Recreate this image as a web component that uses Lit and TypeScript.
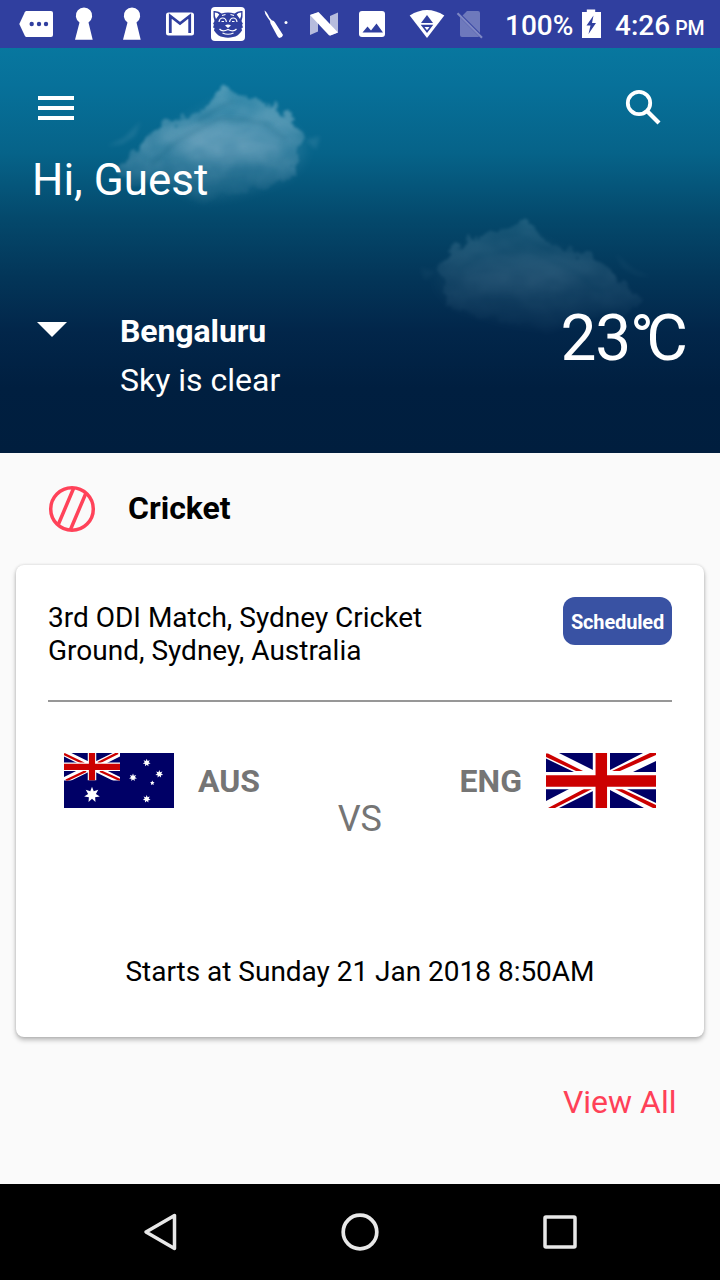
import { LitElement, html, svg, css } from "lit";
import { customElement } from "lit/decorators.js";

@customElement("status-bar")
class StatusBar extends LitElement {
  static styles = css`
    :host { display: flex; height: 48px; background: #303f9f; color: #fff; font-family: Roboto, sans-serif; font-weight: 500; }
    svg { display: block; flex: none; }
    .battery-text { width: 74px; padding-left: 5px; box-sizing: border-box; font-size: 28px; line-height: 51px; white-space: nowrap; }
    .clock { padding-left: 9px; font-size: 28px; line-height: 51px; white-space: nowrap; }
    .clock small { font-size: 19.5px; margin-left: 5px; }
  `;

  cell(x: number, w: number, body: unknown) {
    return html`<svg width=${w} height="48" viewBox="${x} 0 ${w} 48" fill="#fff">${body}</svg>`;
  }

  render() {
    const keyhole = (x: number) => svg`<path d="M${x - 4.5} 22.5a8.2 8.2 0 1 1 9 0l4.2 17.2h-17.7z"/>`;
    return html`
      ${this.cell(0, 60, svg`<path d="M26.5 11H51q2 0 2 2v22q0 2-2 2H26.500q-1 0-1.700-1.200L19.300 24l5.500-11.800q.7-1.200 1.700-1.200z"/><g fill="#303f9f"><circle cx="31.700" cy="24" r="2.200"/><circle cx="39" cy="24" r="2.200"/><circle cx="46" cy="24" r="2.200"/></g>`)}
      ${this.cell(60, 48, keyhole(84))}
      ${this.cell(108, 48, keyhole(132))}
      ${this.cell(156, 48, svg`<rect x="166" y="12.500" width="28" height="23" rx="2.500"/><path d="M170.300 33V16l9.700 7.500 9.700-7.500v17" fill="none" stroke="#303f9f" stroke-width="2.800"/>`)}
      ${this.cell(204, 48, svg`
        <rect x="211" y="7" width="34" height="34" rx="4"/>
        <path fill="#303f9f" d="M213.500 11q5-.5 8 2.500 6.500-2 13 0 3-3 8-2.500.5 6-1 10l1.500 3-1 .5 1 3-1.500.5.500 2.500q-4 6-9 6.500-5 1.500-10 0-5-.5-9-6.500l.5-2.500-1.500-.5 1-3-1-.5 1.500-3q-1.500-4-1-10z"/>
        <path d="M214.800 12.500q3 0 4.500 2l-3.300 4.500q-1.500-3-1.200-6.500zM241.200 12.500q-3 0-4.500 2l3.300 4.500q1.500-3 1.200-6.500z"/>
        <g fill="none" stroke="#fff" stroke-width="1.200">
          <path d="M222 15.500l3.500-1M230.500 14.500l3.500 1"/>
          <path d="M219 22q.5-4 3.700-4t3.700 4M229.600 22q.5-4 3.700-4t3.700 4M221.500 21.500h2.500M232 21.500h2.500"/>
          <path d="M219.500 29q3 3.500 8.500 .5 5.500 3 8.500-.5M222.500 33q5.500 2.500 11 0"/>
        </g>
        <path d="M225 25.500q3-2 6 0l-3 2.500z"/>`)}
      ${this.cell(252, 48, svg`<path d="M264.500 10.500q2.500 1.500 4.800 7l2.700 3q1.500-.5 3 2l8 12.500q-.5 2.500-3.500 3-1.500-.5-2.500-2.500l-6.500-12-.500-2.500-2.500-3.500q-3-4-3-7z"/><circle cx="286" cy="22.500" r="1.500"/>`)}
      ${this.cell(300, 48, svg`<path d="M310 15l8-2.500v19l-8 3.500zM330 16l8-3.500v20l-8 3z" opacity=".65"/><path d="M310 15l8.500-3 19.500 20.500-7.500 3q-1 .3-1.800-.500z"/>`)}
      ${this.cell(348, 48, svg`<rect x="359" y="11" width="26" height="26" rx="3"/><path d="M362.500 32.500l5-6 3.500 4 5.500-7 6.500 9z" fill="#303f9f"/>`)}
      ${this.cell(396, 54, svg`<path d="M409.700 15.500Q427 4.500 444.300 15.500L427 38z"/><path d="M427 15l6 8h-12zM420.700 24.800h12.600L427 33z" fill="#303f9f"/><path d="M424.500 27h5l-2.500 3.300z"/>`)}
      ${this.cell(450, 50, svg`<g opacity=".3"><path d="M460 17.500l19 19q-.5.5-1.500.5H462q-2 0-2-2zM462.500 15.500l4.500-4.500h11q2 0 2 2v20z"/></g><path d="M457.500 13.300l24.500 24.500" stroke="#fff" stroke-width="2.200" opacity=".38"/>`)}
      <span class="battery-text">100%</span>
      ${this.cell(574, 32, svg`<path d="M586.800 12v-2.500h8.400V12h5.800v26h-19V12z"/><path d="M593.500 15.500l-7 10h4l-2 8.500 7.500-11h-4z" fill="#303f9f"/>`)}
      <span class="clock">4:26<small>PM</small></span>`;
  }
}

@customElement("sky-clouds")
class SkyClouds extends LitElement {
  static styles = css`
    :host { position: absolute; inset: 0; }
    svg { display: block; }
  `;
  render() {
    return html`<svg width="720" height="405" viewBox="0 48 720 405">
      <defs>
        <linearGradient id="haze" x1="0" y1="0" x2="0" y2="1">
          <stop offset="0" stop-color="#a4cbd9" stop-opacity=".46"/>
          <stop offset=".5" stop-color="#a4c4d6" stop-opacity=".42"/>
          <stop offset=".68" stop-color="#8fb4ca" stop-opacity=".27"/>
          <stop offset=".85" stop-color="#7fa3bb" stop-opacity=".1"/>
          <stop offset="1" stop-color="#7fa3bb" stop-opacity=".01"/>
        </linearGradient>
        <filter id="rough" x="-20%" y="-20%" width="140%" height="140%" color-interpolation-filters="sRGB">
          <feTurbulence type="fractalNoise" baseFrequency=".07" numOctaves="4" seed="11" result="n"/>
          <feDisplacementMap in="SourceGraphic" in2="n" scale="16" xChannelSelector="R" yChannelSelector="G" result="shape"/>
          <feTurbulence type="fractalNoise" baseFrequency=".022 .04" numOctaves="3" seed="4"/>
          <feColorMatrix values="0 0 0 0 1  0 0 0 0 1  0 0 0 0 1  1.100 0 0 0 .25" result="mist"/>
          <feComposite in="shape" in2="mist" operator="in"/>
          <feGaussianBlur stdDeviation="1.600"/>
        </filter>
        <filter id="soft" x="-30%" y="-50%" width="160%" height="200%" color-interpolation-filters="sRGB"><feGaussianBlur stdDeviation="6"/></filter>
        <filter id="ridge" x="-30%" y="-50%" width="160%" height="200%" color-interpolation-filters="sRGB"><feGaussianBlur stdDeviation="2"/></filter>
        <g id="cloud">
          <path filter="url(#rough)" fill="url(#haze)" d="M116 170L134 152 147 138 158 130 166 121 176 125 186 115 199 113 211 98 223 84 232 92 241 98 255 95 267 103 273 107 275 102 280 111 290 115 295 127 305 137 300 152 294 166 296 178 284 180 267 187 238 190 218 196 207 206 192 203 186 193 158 188 122 180z"/>
          <path filter="url(#soft)" fill="#8fb9d0" opacity=".13" d="M120 172L170 128 222 98 276 112 306 142 304 160 288 178 240 194 200 200 180 190z"/>
          <path filter="url(#ridge)" fill="#a5c9d9" opacity=".12" d="M107 146l17-8 17-17-6 15-13 8zM306 140l14-4-4 14z"/>
          <path filter="url(#soft)" fill="#aac9df" opacity=".2" d="M174 152Q190 130 220 123L258 124Q284 131 284 148L262 157 210 158z"/>
          <path filter="url(#ridge)" fill="none" stroke="#06506f" stroke-width="3.500" opacity=".16" d="M150 165L176 142 196 130 219 119 242 119 266 124 285 139M198 122L218 108 234 101"/>
        </g>
      </defs>
      <use href="#cloud"/>
      <g opacity=".35"><use href="#cloud" transform="translate(769 137) scale(-1.09 .96)"/></g>
    </svg>`;
  }
}

@customElement("union-flag")
class UnionFlag extends LitElement {
  static styles = css`:host, svg { display: block; }`;
  render() {
    return html`<svg width="110" height="55" viewBox="0 0 110 55">
      <rect width="110" height="55" fill="#fff"/>
      <path fill="#006" d="M13 0H47V17zM0 5.500V19H28zM64 0H97L64 17zM110 8V19H87zM0 36H23L0 48zM13 55H47V38zM64 37V55H98zM81 36H110V50z"/>
      <path d="M0 .5h2L37 18h-7L0 4zM110 0h-6L66 18h8L110 2zM2 55h7L46 36h-8zM69 36h7L110 52v3h-3z" fill="#c00"/>
      <path d="M55.300 0v55M0 27.700h110" stroke="#fff" stroke-width="17"/>
      <path d="M55.300 0v55M0 27.900h110" stroke="#c00" stroke-width="11.500"/>
    </svg>`;
  }
}

@customElement("australia-flag")
class AustraliaFlag extends LitElement {
  static styles = css`:host, svg { display: block; }`;
  star(cx: number, cy: number, r: number, n = 7) {
    const pts = Array.from({ length: n * 2 }, (_, i) => {
      const q = i % 2 ? r * 0.5 : r;
      const a = (Math.PI * i) / n - Math.PI / 2;
      return `${(cx + q * Math.cos(a)).toFixed(2)},${(cy + q * Math.sin(a)).toFixed(2)}`;
    }).join(" ");
    return svg`<polygon points=${pts} fill="#fff"/>`;
  }
  render() {
    return html`<svg width="110" height="55" viewBox="0 0 110 55">
      <rect width="110" height="55" fill="#006"/>
      <svg width="56" height="27.500" viewBox="0 0 56 27.500">
        <path d="M0 0L56 27.500M56 0L0 27.500" stroke="#fff" stroke-width="6.500"/>
        <path d="M0 1L20 10.500M54 0L34 10M2 27.500L22 18M56 27L36 18" stroke="#c00" stroke-width="2.400"/>
        <path d="M28 0v27.500M0 13.800h56" stroke="#fff" stroke-width="8.500"/>
        <path d="M28 0v27.500M0 13.900h56" stroke="#c00" stroke-width="6.200"/>
      </svg>
      ${this.star(28, 41.800, 8)}${this.star(82.700, 9.700, 4)}${this.star(95.300, 21, 4)}
      ${this.star(69, 24.500, 4)}${this.star(82.700, 46, 4)}${this.star(88.300, 30, 2.400, 5)}
    </svg>`;
  }
}

@customElement("app-root")
class AppRoot extends LitElement {
  static styles = css`
    :host { display: flex; flex-direction: column; width: 720px; height: 1280px; overflow: hidden; background: #fafafa; color: #000; font-family: Roboto, sans-serif; }
    svg { display: block; }
    .hero { position: relative; height: 405px; flex: none; color: #fff; background: linear-gradient(#08779f 0, #07719a 9%, #066389 26%, #04496c 42%, #033558 57%, #02264a 70%, #001f40 84%, #001e3e 100%); }
    .content { position: relative; display: flex; flex-direction: column; height: 100%; }
    .toolbar { display: flex; justify-content: space-between; padding: 40px 56px 0 38px; height: 62px; }
    .hello { padding-left: 32px; font-size: 44px; line-height: 60px; }
    .weather { display: flex; margin-top: 98px; padding: 0 32px 0 37px; }
    .place { flex: 1; margin-left: 53px; }
    .city { font-size: 32px; font-weight: 700; line-height: 46px; letter-spacing: -.1px; }
    .sky { font-size: 32px; line-height: 52px; }
    .arrow { margin-top: 14px; }
    .temp { font-size: 64px; line-height: 62px; white-space: nowrap; }
    .digits { letter-spacing: -1.2px; }
    .degree { letter-spacing: -7.6px; }
    .section { display: flex; align-items: center; height: 112px; padding-left: 48px; gap: 32px; font-size: 32px; font-weight: 700; flex: none; }
    .section span { line-height: 38px; margin-top: -2px; }
    .card { margin: 0 16px; height: 472px; box-sizing: border-box; padding: 32px; border-radius: 8px; background: #fff; box-shadow: 0 3px 5px rgba(0,0,0,.26), 0 0 3px rgba(0,0,0,.14); flex: none; }
    .top { display: flex; justify-content: space-between; align-items: flex-start; height: 103px; border-bottom: 2px solid #979797; }
    .venue { font-size: 28px; line-height: 33px; padding-top: 4px; width: 440px; }
    .badge { width: 109px; height: 48px; border-radius: 12px; background: #3952a3; color: #fff; font-size: 20px; font-weight: 700; line-height: 50px; text-align: center; letter-spacing: -.15px; }
    .teams { display: flex; justify-content: space-between; padding: 51px 16px 0; height: 256px; box-sizing: border-box; color: #757575; }
    .team { display: flex; gap: 24px; font-size: 32px; font-weight: 700; line-height: 56px; height: 55px; }
    .vs { font-size: 36px; line-height: 42px; margin-top: 45px; }
    .starts { font-size: 28px; line-height: 33px; text-align: center; margin-top: -3px; letter-spacing: -.02px; }
    .all { text-align: right; padding: 46px 43.500px 0; font-size: 32px; line-height: 38px; color: #ff4057; flex: 1; }
    .nav { display: flex; justify-content: center; gap: 152px; align-items: center; height: 96px; background: #000; flex: none; }
  `;
  render() {
    return html`
      <status-bar></status-bar>
      <header class="hero">
        <sky-clouds></sky-clouds>
        <div class="content">
          <div class="toolbar">
            <svg width="36" height="40" fill="#fff"><path d="M0 8h36v4H0zM0 18h36v4H0zM0 28h36v4H0z"/></svg>
            <svg width="40" height="40" fill="none" stroke="#fff" stroke-width="3.800"><circle cx="15" cy="15" r="11.200"/><path d="M23 23L35 35" stroke-width="4.200"/></svg>
          </div>
          <div class="hello">Hi, Guest</div>
          <div class="weather">
            <svg class="arrow" width="30" height="15" fill="#fff"><path d="M0 0h30L15 15z"/></svg>
            <div class="place"><div class="city">Bengaluru</div><div class="sky">Sky is clear</div></div>
            <div class="temp"><span class="digits">23</span><span class="degree">°</span>C</div>
          </div>
        </div>
      </header>
      <div class="section">
        <svg width="48" height="48" fill="none" stroke="#ff4259" stroke-width="3.500"><circle cx="24" cy="24" r="21.300"/><path d="M25.500 3.500L10.500 39M38 8L22.500 44.500"/></svg>
        <span>Cricket</span>
      </div>
      <section class="card">
        <div class="top">
          <div class="venue">3rd ODI Match, Sydney Cricket Ground, Sydney, Australia</div>
          <div class="badge">Scheduled</div>
        </div>
        <div class="teams">
          <div class="team"><australia-flag></australia-flag><span>AUS</span></div>
          <div class="vs">VS</div>
          <div class="team"><span>ENG</span><union-flag></union-flag></div>
        </div>
        <div class="starts">Starts at Sunday 21 Jan 2018 8:50AM</div>
      </section>
      <div class="all">View All</div>
      <nav class="nav">
        <svg width="48" height="48" fill="none" stroke="#e8e8e8" stroke-width="3.500" stroke-linejoin="round"><path d="M38.500 7.500v33L10 24z"/></svg>
        <svg width="48" height="48" fill="none" stroke="#e8e8e8" stroke-width="3.700"><circle cx="24" cy="24" r="16.800"/></svg>
        <svg width="48" height="48" fill="none" stroke="#e8e8e8" stroke-width="3.500"><rect x="9" y="9" width="30" height="30" rx="1"/></svg>
      </nav>`;
  }
}
